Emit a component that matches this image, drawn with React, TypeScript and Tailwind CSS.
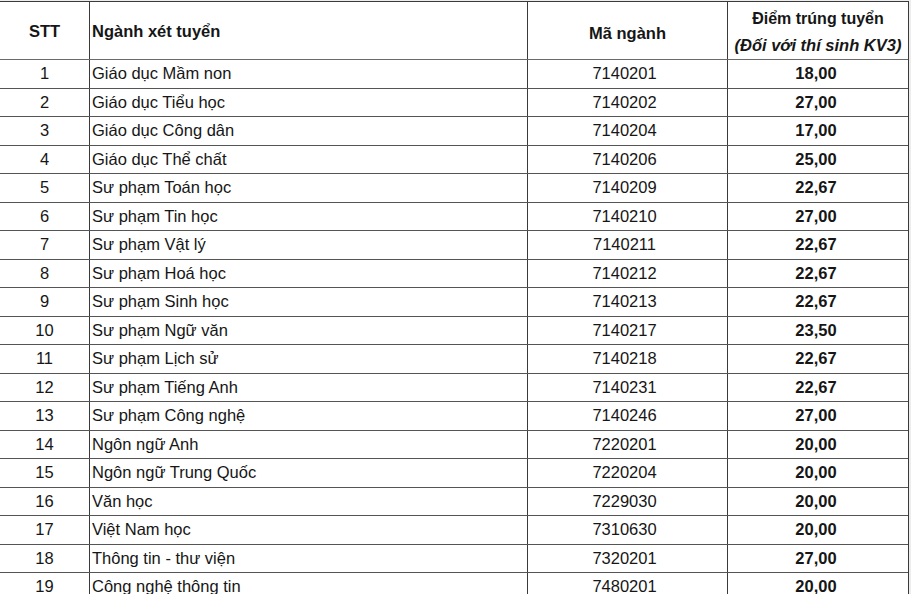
import React from "react";

const rows: [string, string, string, string][] = [
  ["1", "Giáo dục Mầm non", "7140201", "18,00"],
  ["2", "Giáo dục Tiểu học", "7140202", "27,00"],
  ["3", "Giáo dục Công dân", "7140204", "17,00"],
  ["4", "Giáo dục Thể chất", "7140206", "25,00"],
  ["5", "Sư phạm Toán học", "7140209", "22,67"],
  ["6", "Sư phạm Tin học", "7140210", "27,00"],
  ["7", "Sư phạm Vật lý", "7140211", "22,67"],
  ["8", "Sư phạm Hoá học", "7140212", "22,67"],
  ["9", "Sư phạm Sinh học", "7140213", "22,67"],
  ["10", "Sư phạm Ngữ văn", "7140217", "23,50"],
  ["11", "Sư phạm Lịch sử", "7140218", "22,67"],
  ["12", "Sư phạm Tiếng Anh", "7140231", "22,67"],
  ["13", "Sư phạm Công nghệ", "7140246", "27,00"],
  ["14", "Ngôn ngữ Anh", "7220201", "20,00"],
  ["15", "Ngôn ngữ Trung Quốc", "7220204", "20,00"],
  ["16", "Văn học", "7229030", "20,00"],
  ["17", "Việt Nam học", "7310630", "20,00"],
  ["18", "Thông tin - thư viện", "7320201", "27,00"],
  ["19", "Công nghệ thông tin", "7480201", "20,00"],
];

export default function App() {
  return (
    <div className="w-[911px] h-[594px] overflow-hidden bg-[#ededed] font-['Liberation_Sans',Arial,sans-serif] text-[16.5px] text-[#161616]">
      <div className="w-[909px] bg-white mt-px border-t border-r border-[#3a3a3a]">
        <div className="grid grid-cols-[90px_438px_200px_180px] h-[58px] border-b border-[#6a6a6a] font-bold">
          <div className="border-r border-[#3a3a3a] flex items-center justify-center pt-[2px]">STT</div>
          <div className="border-r border-[#3a3a3a] flex items-center pl-[2px] pt-[2px]">Ngành xét tuyển</div>
          <div className="border-r border-[#3a3a3a] flex items-center justify-center pt-[6px]">Mã ngành</div>
          <div className="flex flex-col items-center justify-center leading-[27px] pt-[2px]">
            <span className="text-[16px]">Điểm trúng tuyển</span>
            <span className="italic text-[16.5px]">(Đối với thí sinh KV3)</span>
          </div>
        </div>
        {rows.map((r) => (
          <div
            key={r[0]}
            className="grid grid-cols-[90px_438px_200px_180px] h-[28.5px] border-b border-[#555]"
          >
            <div className="border-r border-[#3a3a3a] flex items-center justify-center">{r[0]}</div>
            <div className="border-r border-[#3a3a3a] flex items-center pl-[2px]">{r[1]}</div>
            <div className="border-r border-[#3a3a3a] flex items-center justify-center pr-[6px]">{r[2]}</div>
            <div className="flex items-center justify-center font-bold pr-[4px]">{r[3]}</div>
          </div>
        ))}
      </div>
    </div>
  );
}
